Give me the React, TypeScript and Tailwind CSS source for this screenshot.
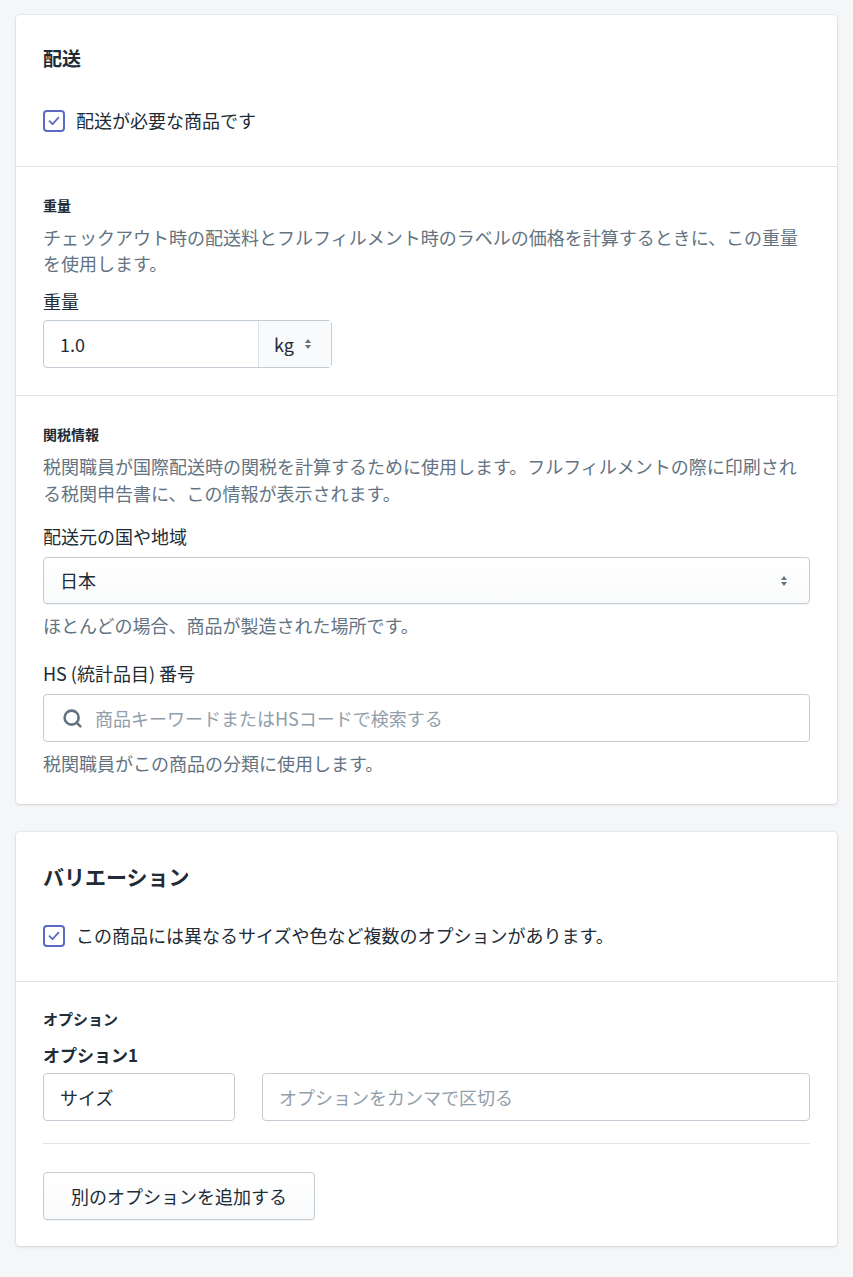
import { Search } from "lucide-react";

const font = { fontFamily: '"Noto Sans CJK JP", "Noto Sans", sans-serif' };

function Checkbox({ label }: { label: string }) {
  return (
    <label className="flex items-center gap-[11px]">
      <span className="flex h-[22px] w-[22px] items-center justify-center rounded-[4px] border-2 border-[#5c6ac4] bg-white">
        <svg width="14" height="14" viewBox="0 0 14 14" fill="none">
          <path d="M2.5 7.2l3 3 6-6.5" stroke="#5c6ac4" strokeWidth="1.8" strokeLinecap="round" strokeLinejoin="round" />
        </svg>
      </span>
      <span className="text-[18px] text-[#212b36]">{label}</span>
    </label>
  );
}

function Arrows() {
  return (
    <svg width="8" height="12" viewBox="0 0 8 12" fill="#637381">
      <path d="M4 1l3 4H1z" />
      <path d="M4 11L1 7h6z" />
    </svg>
  );
}

export default function App() {
  return (
    <div className="min-h-[1277px] bg-[#f4f6f8] px-4 pt-[15px] pb-6" style={font}>
      <div className="rounded-[4px] bg-white shadow-[0_0_0_1px_rgba(63,63,68,0.05),0_1px_3px_0_rgba(63,63,68,0.15)]">
        <div className="px-[27px] pt-[30px] pb-[32px]">
          <h2 className="text-[19px] font-bold text-[#212b36] leading-[26px]">配送</h2>
          <div className="mt-[36px]"><Checkbox label="配送が必要な商品です" /></div>
        </div>
        <div className="border-t border-[#dfe3e8] px-[27px] pt-[27px] pb-[27px]">
          <h3 className="text-[14px] font-bold text-[#212b36] leading-[22px]">重量</h3>
          <p className="mt-[8px] text-[18px] leading-[26px] text-[#637381]">
            チェックアウト時の配送料とフルフィルメント時のラベルの価格を計算するときに、この重量を使用します。
          </p>
          <div className="mt-[12px] text-[18px] leading-[26px] text-[#212b36]">重量</div>
          <div className="mt-[6px] flex h-[48px] w-[289px] rounded-[4px] border border-[#c4cdd5] shadow-[inset_0_1px_0_0_rgba(99,115,129,0.05)]">
            <div className="flex flex-1 items-center px-[16px] text-[18px] text-[#212b36]">1.0</div>
            <div className="flex w-[73px] items-center gap-[10px] border-l border-[#dfe3e8] bg-[#f9fafb] pl-[15px] text-[18px] text-[#212b36]">
              kg <Arrows />
            </div>
          </div>
        </div>
        <div className="border-t border-[#dfe3e8] px-[27px] pt-[27px] pb-[28px]">
          <h3 className="text-[14px] font-bold text-[#212b36] leading-[22px]">関税情報</h3>
          <p className="mt-[8px] text-[18px] leading-[27px] text-[#637381]">
            税関職員が国際配送時の関税を計算するために使用します。フルフィルメントの際に印刷される税関申告書に、この情報が表示されます。
          </p>
          <div className="mt-[16px] text-[18px] leading-[26px] text-[#212b36]">配送元の国や地域</div>
          <div className="mt-[8px] flex h-[47px] items-center justify-between rounded-[4px] border border-[#c4cdd5] bg-gradient-to-b from-white to-[#f9fafb] px-[16px] shadow-[0_1px_0_0_rgba(22,29,37,0.05)]">
            <span className="text-[18px] text-[#212b36]">日本</span>
            <span className="pr-[5px]"><Arrows /></span>
          </div>
          <p className="mt-[8px] text-[18px] leading-[26px] text-[#637381]">ほとんどの場合、商品が製造された場所です。</p>
          <div className="mt-[22px] text-[18px] leading-[26px] text-[#212b36]">HS (統計品目) 番号</div>
          <div className="mt-[8px] flex h-[48px] items-center gap-[12px] rounded-[4px] border border-[#c4cdd5] px-[18px]">
            <Search size={21} strokeWidth={3} color="#637381" />
            <span className="text-[18px] text-[#919eab]">商品キーワードまたはHSコードで検索する</span>
          </div>
          <p className="mt-[8px] text-[18px] leading-[26px] text-[#637381]">税関職員がこの商品の分類に使用します。</p>
        </div>
      </div>

      <div className="mt-[28px] rounded-[4px] bg-white shadow-[0_0_0_1px_rgba(63,63,68,0.05),0_1px_3px_0_rgba(63,63,68,0.15)]">
        <div className="px-[27px] pt-[29px] pb-[32px]">
          <h2 className="text-[21px] font-bold text-[#212b36] leading-[30px]">バリエーション</h2>
          <div className="mt-[31px]"><Checkbox label="この商品には異なるサイズや色など複数のオプションがあります。" /></div>
        </div>
        <div className="border-t border-[#dfe3e8] px-[27px] pt-[26px] pb-[26px]">
          <h3 className="text-[15px] font-bold text-[#212b36] leading-[22px]">オプション</h3>
          <div className="mt-[13px] text-[17px] font-bold leading-[24px] text-[#212b36]">オプション1</div>
          <div className="mt-[6px] flex gap-[27px]">
            <div className="flex h-[48px] w-[192px] items-center rounded-[4px] border border-[#c4cdd5] px-[16px] text-[18px] text-[#212b36]">サイズ</div>
            <div className="flex h-[48px] flex-1 items-center rounded-[4px] border border-[#c4cdd5] px-[16px] text-[18px] text-[#919eab]">オプションをカンマで区切る</div>
          </div>
          <div className="mt-[22px] border-t border-[#dfe3e8]" />
          <button className="mt-[28px] flex h-[48px] w-[272px] items-center justify-center rounded-[4px] border border-[#c4cdd5] bg-gradient-to-b from-white to-[#f9fafb] text-[18px] text-[#212b36] shadow-[0_1px_0_0_rgba(22,29,37,0.05)]">
            別のオプションを追加する
          </button>
        </div>
      </div>
    </div>
  );
}
